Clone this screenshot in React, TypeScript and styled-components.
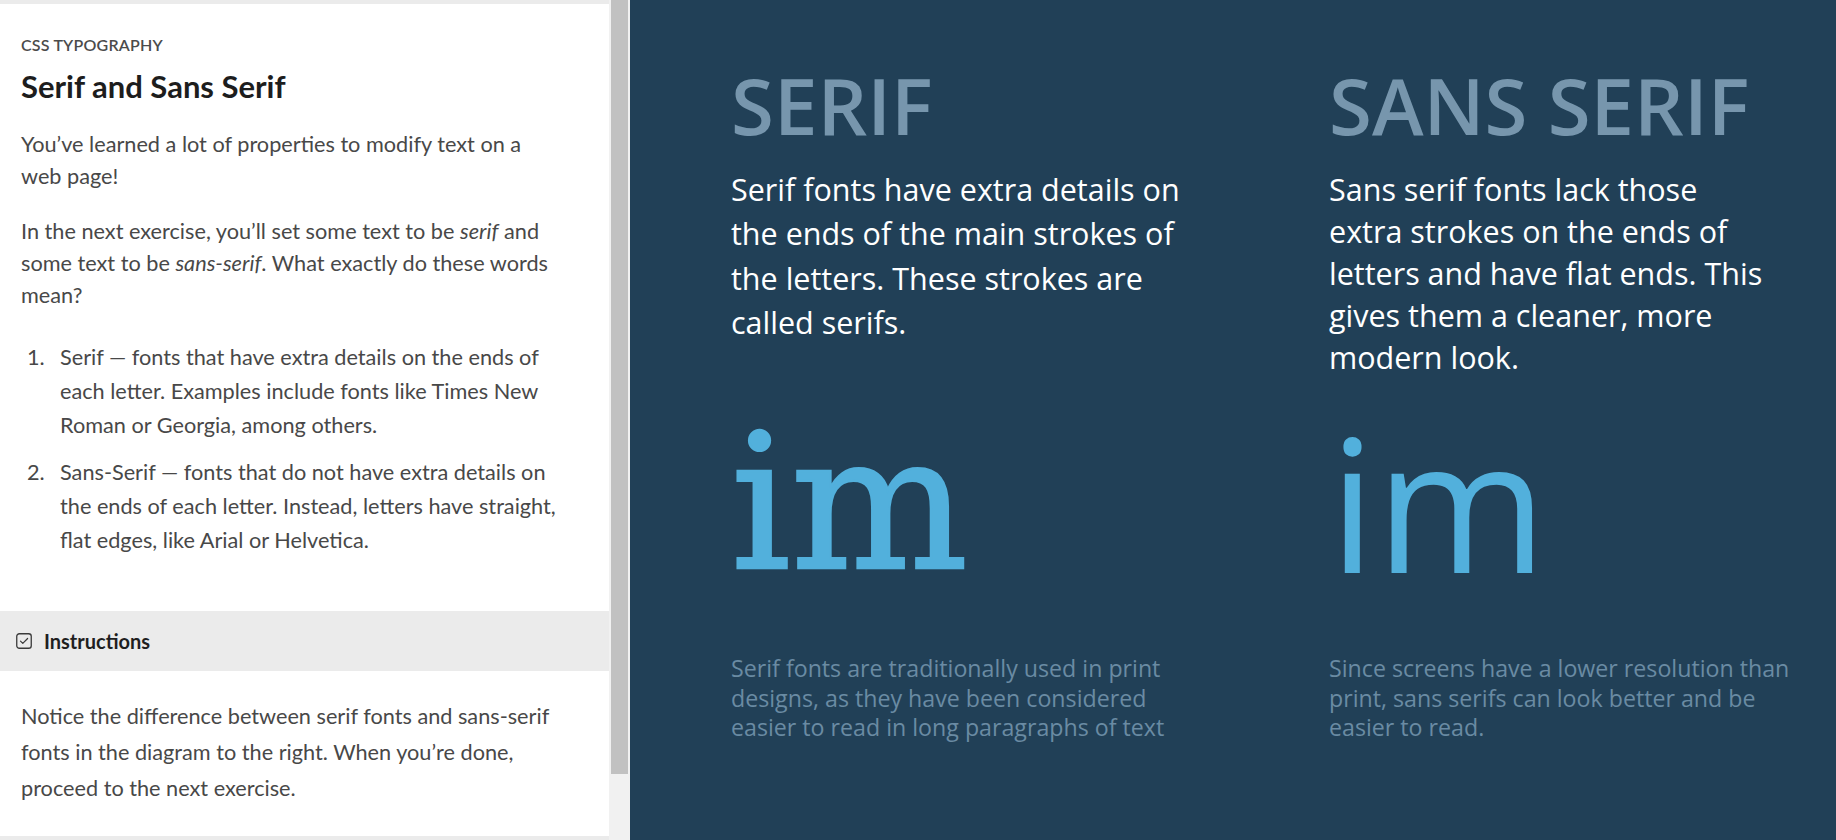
import React from "react";
import styled, { createGlobalStyle } from "styled-components";

const Global = createGlobalStyle`
  html, body { margin: 0; padding: 0; }
  body { width: 1836px; height: 840px; overflow: hidden; background: #fff; }
  *, *::before, *::after { box-sizing: border-box; }
`;

const Page = styled.div`
  display: flex;
  width: 1836px;
  height: 840px;
`;

const LeftPane = styled.div`
  width: 609px;
  flex-shrink: 0;
  background: #ebebeb;
  padding: 4px 0;
  display: flex;
`;

const Card = styled.div`
  flex: 1;
  background: #ffffff;
  display: flex;
  flex-direction: column;
  overflow: hidden;
`;

const Intro = styled.div`
  padding: 31px 20px 0 21px;
`;

const Eyebrow = styled.div`
  font: 600 16px/20px Lato, "Open Sans", sans-serif;
  color: #4b4b4b;
  letter-spacing: 0.2px;
  text-transform: uppercase;
`;

const Title = styled.h1`
  margin: 12px 0 0;
  font: 700 31px/38px Lato, "Open Sans", sans-serif;
  color: #1d1d1d;
`;

const Para = styled.p`
  margin: 23px 0 0;
  font: 400 21.7px/32px Lato, "Open Sans", sans-serif;
  color: #484848;
  white-space: nowrap;
`;

const List = styled.ol`
  margin: 29px 0 0;
  padding: 0;
  list-style: none;
  counter-reset: step;
`;

const Item = styled.li`
  display: flex;
  counter-increment: step;
  font: 400 21.7px/34px Lato, "Open Sans", sans-serif;
  color: #484848;
  white-space: nowrap;
  &::before {
    content: counter(step) ".";
    width: 39px;
    padding-left: 6px;
    flex-shrink: 0;
  }
  & + & {
    margin-top: 13px;
  }
`;

const ItemText = styled.span``;

const InstructionsBar = styled.div`
  margin-top: 54px;
  height: 60px;
  flex-shrink: 0;
  background: #ebebeb;
  display: flex;
  align-items: center;
  gap: 12px;
  padding-left: 16px;
  font: 700 20px/24px Lato, "Open Sans", sans-serif;
  color: #1f1f1f;
`;

const Notice = styled.p`
  margin: 0;
  padding: 27px 20px 0 21px;
  font: 400 21.7px/36px Lato, "Open Sans", sans-serif;
  color: #484848;
  white-space: nowrap;
`;

const ScrollTrack = styled.div`
  width: 21px;
  flex-shrink: 0;
  background: #f1f1f1;
  padding: 0 2px;
`;

const ScrollThumb = styled.div`
  height: 774px;
  background: #c1c1c1;
`;

const RightPane = styled.div`
  flex: 1;
  background: #214057;
  padding: 66px 0 0 101px;
  display: flex;
  gap: 128px;
`;

const Column = styled.section`
  width: 470px;
  display: flex;
  flex-direction: column;
`;

const Heading = styled.h2`
  margin: 0;
  font: 600 78px/78px "Open Sans", sans-serif;
  color: #7796ad;
  white-space: nowrap;
`;

const Body = styled.p<{ $tight?: boolean }>`
  margin: ${(p) => (p.$tight ? "24px" : "23px")} 0 0;
  height: ${(p) => (p.$tight ? "221px" : "222px")};
  font-family: "Open Sans", sans-serif;
  font-size: 30.5px;
  line-height: ${(p) => (p.$tight ? "42px" : "44.4px")};
  color: #ffffff;
  white-space: nowrap;
`;

const Glyphs = styled.div<{ $serif?: boolean }>`
  margin-top: 11px;
  height: 195px;
  padding-top: ${(p) => (p.$serif ? "6px" : "4px")};
  font-family: ${(p) => (p.$serif ? '"DejaVu Serif", "Liberation Serif", serif' : '"Open Sans", sans-serif')};
  font-size: ${(p) => (p.$serif ? "187px" : "185px")};
  line-height: 195px;
  color: #52b0dc;
  -webkit-text-stroke: ${(p) => (p.$serif ? "2.5px #52b0dc" : "0")};
  white-space: nowrap;
`;

const Note = styled.p`
  margin: 59px 0 0;
  font: 400 23.2px/29.5px "Open Sans", sans-serif;
  color: #6a8ba3;
  white-space: nowrap;
`;

const CheckIcon = () => (
  <svg width="16" height="16" viewBox="0 0 16 16" aria-hidden="true">
    <rect x="0.75" y="0.75" width="14.5" height="14.5" rx="2.6" fill="none" stroke="#3a3a3a" strokeWidth="1.3" />
    <path d="M4.5 8.1 L6.8 10.4 L11.6 5.5" fill="none" stroke="#3a3a3a" strokeWidth="1.2" strokeLinecap="round" strokeLinejoin="round" />
  </svg>
);

export default function App() {
  return (
    <>
      <Global />
      <Page>
        <LeftPane>
          <Card>
            <Intro>
              <Eyebrow>CSS Typography</Eyebrow>
              <Title>Serif and Sans Serif</Title>
              <Para>
                You’ve learned a lot of properties to modify text on a<br />
                web page!
              </Para>
              <Para>
                In the next exercise, you’ll set some text to be <em>serif</em> and<br />
                some text to be <em>sans-serif</em>. What exactly do these words<br />
                mean?
              </Para>
              <List>
                <Item>
                  <ItemText>
                    Serif — fonts that have extra details on the ends of<br />
                    each letter. Examples include fonts like Times New<br />
                    Roman or Georgia, among others.
                  </ItemText>
                </Item>
                <Item>
                  <ItemText>
                    Sans-Serif — fonts that do not have extra details on<br />
                    the ends of each letter. Instead, letters have straight,<br />
                    flat edges, like Arial or Helvetica.
                  </ItemText>
                </Item>
              </List>
            </Intro>
            <InstructionsBar>
              <CheckIcon />
              Instructions
            </InstructionsBar>
            <Notice>
              Notice the difference between serif fonts and sans-serif<br />
              fonts in the diagram to the right. When you’re done,<br />
              proceed to the next exercise.
            </Notice>
          </Card>
        </LeftPane>
        <ScrollTrack>
          <ScrollThumb />
        </ScrollTrack>
        <RightPane>
          <Column>
            <Heading>SERIF</Heading>
            <Body>
              Serif fonts have extra details on<br />
              the ends of the main strokes of<br />
              the letters. These strokes are<br />
              called serifs.
            </Body>
            <Glyphs $serif>im</Glyphs>
            <Note>
              Serif fonts are traditionally used in print<br />
              designs, as they have been considered<br />
              easier to read in long paragraphs of text
            </Note>
          </Column>
          <Column>
            <Heading>SANS SERIF</Heading>
            <Body $tight>
              Sans serif fonts lack those<br />
              extra strokes on the ends of<br />
              letters and have flat ends. This<br />
              gives them a cleaner, more<br />
              modern look.
            </Body>
            <Glyphs>im</Glyphs>
            <Note>
              Since screens have a lower resolution than<br />
              print, sans serifs can look better and be<br />
              easier to read.
            </Note>
          </Column>
        </RightPane>
      </Page>
    </>
  );
}
